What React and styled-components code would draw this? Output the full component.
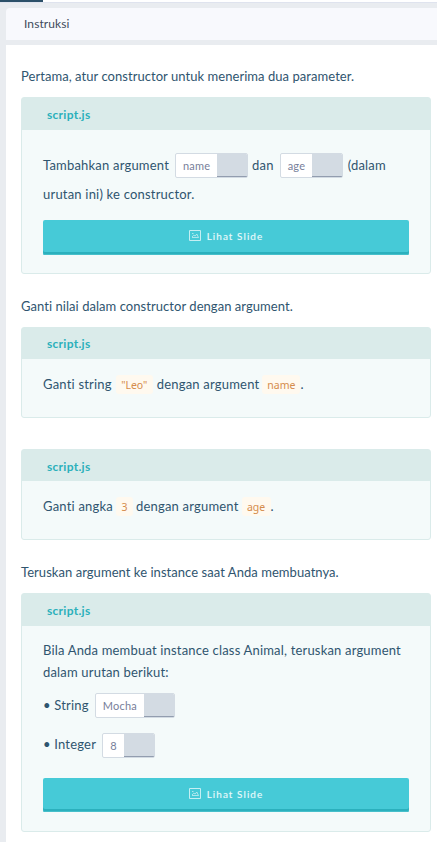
import React from "react";
import styled, { createGlobalStyle } from "styled-components";

const GlobalStyle = createGlobalStyle`
  *, *::before, *::after { box-sizing: border-box; }
  body {
    margin: 0;
    background: #e9ecf0;
    color: #2f556f;
    font-family: Lato, "Open Sans", sans-serif;
    font-size: 13px;
    letter-spacing: 0.2px;
  }
`;

const Page = styled.div`
  height: 842px;
  display: flex;
  flex-direction: column;
  overflow: hidden;
`;

const ProgressTrack = styled.div`
  flex: none;
  height: 3px;
  background: #fff;
  border-bottom: 1px solid #dfe3ee;
`;

const ProgressBar = styled.div`
  width: 43px;
  height: 2px;
  background: #2c5069;
`;

const PanelHeader = styled.header`
  flex: none;
  height: 32px;
  margin: 5px 0 5px 6px;
  padding-left: 18px;
  background: #f8f9fd;
  border-top-left-radius: 4px;
  color: #3e4a5b;
  font-size: 12px;
  line-height: 32px;
  letter-spacing: 0.08px;
`;

const Panel = styled.main`
  flex: 1;
  margin-left: 6px;
  padding: 20px 6px 0 15px;
  background: #fff;
`;

const Lead = styled.p`
  margin: 0;
  height: 32px;
  line-height: 22px;
  letter-spacing: 0.05px;
  white-space: nowrap;
`;

const Card = styled.section`
  height: ${(p) => p.$height}px;
  margin-bottom: ${(p) => p.$gap}px;
  background: #f4fafa;
  border: 1px solid #daebea;
  border-radius: 3px;
`;

const CardTitle = styled.h2`
  margin: 0;
  height: ${(p) => p.$height}px;
  padding: ${(p) => p.$offset}px 0 0 25px;
  background: #daebea;
  color: #2bb0bb;
  font-size: 12px;
  font-weight: 700;
  line-height: 30px;
  letter-spacing: 0.28px;
`;

const CardBody = styled.div`
  padding: ${(p) => p.$top}px 21px 0;
`;

const Line = styled.div`
  display: flex;
  align-items: center;
  height: ${(p) => p.$height || 22}px;
  white-space: pre;
  letter-spacing: 0.2px;
`;

const Paragraph = styled.p`
  margin: 0;
  line-height: 22px;
  letter-spacing: 0.18px;
`;

const Chip = styled.span`
  flex: none;
  display: flex;
  width: ${(p) => p.$width}px;
  height: 25px;
  margin: 0 ${(p) => p.$after || 0}px 0 ${(p) => p.$before}px;
  border: 1px solid #d3dbe3;
  border-radius: 2px;
  background: #fff;
  overflow: hidden;
`;

const ChipText = styled.span`
  flex: 1;
  padding-left: 7px;
  color: #77809a;
  font-size: 11px;
  line-height: 24px;
  letter-spacing: 0.2px;
`;

const ChipHandle = styled.span`
  width: 30px;
  height: 23px;
  background: #d3dbe3;
  box-shadow: inset 0 -1px #929daf, 0 1px #929daf;
`;

const Code = styled.code`
  flex: none;
  width: ${(p) => p.$width}px;
  height: 19px;
  margin: 0 ${(p) => p.$after}px 0 ${(p) => p.$before}px;
  border-radius: 3px;
  background: #fff9ef;
  color: #d58c4c;
  font-family: "Noto Sans", sans-serif;
  font-size: 10.5px;
  letter-spacing: 0;
  line-height: 20px;
  text-align: center;
`;

const SlideButton = styled.button`
  display: flex;
  align-items: center;
  justify-content: center;
  gap: 6px;
  width: 100%;
  height: ${(p) => p.$height}px;
  margin-top: ${(p) => p.$top}px;
  padding: 0 0 ${(p) => p.$height - 31}px;
  border: 0;
  border-radius: 2px;
  background: #46cad7;
  box-shadow: inset 0 -1px #46bfca, inset 0 -3px #2bb0bd;
  color: #e9fafb;
  font: 400 10px Lato, sans-serif;
  letter-spacing: 1.05px;
  text-shadow: 0 0 1px rgba(255, 255, 255, 0.35);
`;

const PictureIcon = () => (
  <svg width="12" height="11" viewBox="0 0 12 11" fill="none" stroke="#c5eff3" strokeWidth="1">
    <path d="M.5 .5h11v10H.5z" />
    <path d="M3 7.5h6.5L7.8 4 6.2 6 4.7 5.2 3 7M3 3.5h1.5" strokeWidth=".8" />
  </svg>
);

const ViewSlide = ({ top, height }) => (
  <SlideButton $top={top} $height={height}>
    <PictureIcon />
    <span>Lihat Slide</span>
  </SlideButton>
);

const Answer = ({ children, width, before, after }) => (
  <Chip $width={width} $before={before} $after={after}>
    <ChipText>{children}</ChipText>
    <ChipHandle />
  </Chip>
);

const RaisedText = styled.span`
  padding-bottom: 2px;
`;

export default function App() {
  return (
    <Page>
      <GlobalStyle />
      <ProgressTrack><ProgressBar /></ProgressTrack>
      <PanelHeader>Instruksi</PanelHeader>
      <Panel>
        <Lead>Pertama, atur constructor untuk menerima dua parameter.</Lead>
        <Card $height={177} $gap={21}>
          <CardTitle $height={32} $offset={2}>script.js</CardTitle>
          <CardBody $top={20}>
            <Line $height={31}>
              <RaisedText>Tambahkan argument</RaisedText>
              <Answer width={73} before={6} after={4}>name</Answer>
              <RaisedText>dan</RaisedText>
              <Answer width={63} before={6} after={5}>age</Answer>
              <RaisedText>(dalam</RaisedText>
            </Line>
            <Line $height={27}><RaisedText>urutan ini) ke constructor.</RaisedText></Line>
            <ViewSlide top={12} height={35} />
          </CardBody>
        </Card>
        <Lead>Ganti nilai dalam constructor dengan argument.</Lead>
        <Card $height={91} $gap={31}>
          <CardTitle $height={31} $offset={1}>script.js</CardTitle>
          <CardBody $top={14}>
            <Line>
              <span>Ganti string</span>
              <Code $width={37} $before={4} $after={4}>"Leo"</Code>
              <span>dengan argument</span>
              <Code $width={38} $before={3} $after={0}>name</Code>
              <span>.</span>
            </Line>
          </CardBody>
        </Card>
        <Card $height={91} $gap={21}>
          <CardTitle $height={31} $offset={2}>script.js</CardTitle>
          <CardBody $top={14}>
            <Line>
              <span>Ganti angka</span>
              <Code $width={17} $before={3} $after={3}>3</Code>
              <span>dengan argument</span>
              <Code $width={29} $before={3} $after={0}>age</Code>
              <span>.</span>
            </Line>
          </CardBody>
        </Card>
        <Lead>Teruskan argument ke instance saat Anda membuatnya.</Lead>
        <Card $height={239} $gap={0}>
          <CardTitle $height={32} $offset={2}>script.js</CardTitle>
          <CardBody $top={13}>
            <Paragraph>Bila Anda membuat instance class Animal, teruskan argument dalam urutan berikut:</Paragraph>
            <Line $height={45}>
              <RaisedText>• String</RaisedText>
              <Answer width={80} before={6}>Mocha</Answer>
            </Line>
            <Line $height={34}>
              <RaisedText>• Integer</RaisedText>
              <Answer width={53} before={6}>8</Answer>
            </Line>
            <ViewSlide top={16} height={34} />
          </CardBody>
        </Card>
      </Panel>
    </Page>
  );
}
